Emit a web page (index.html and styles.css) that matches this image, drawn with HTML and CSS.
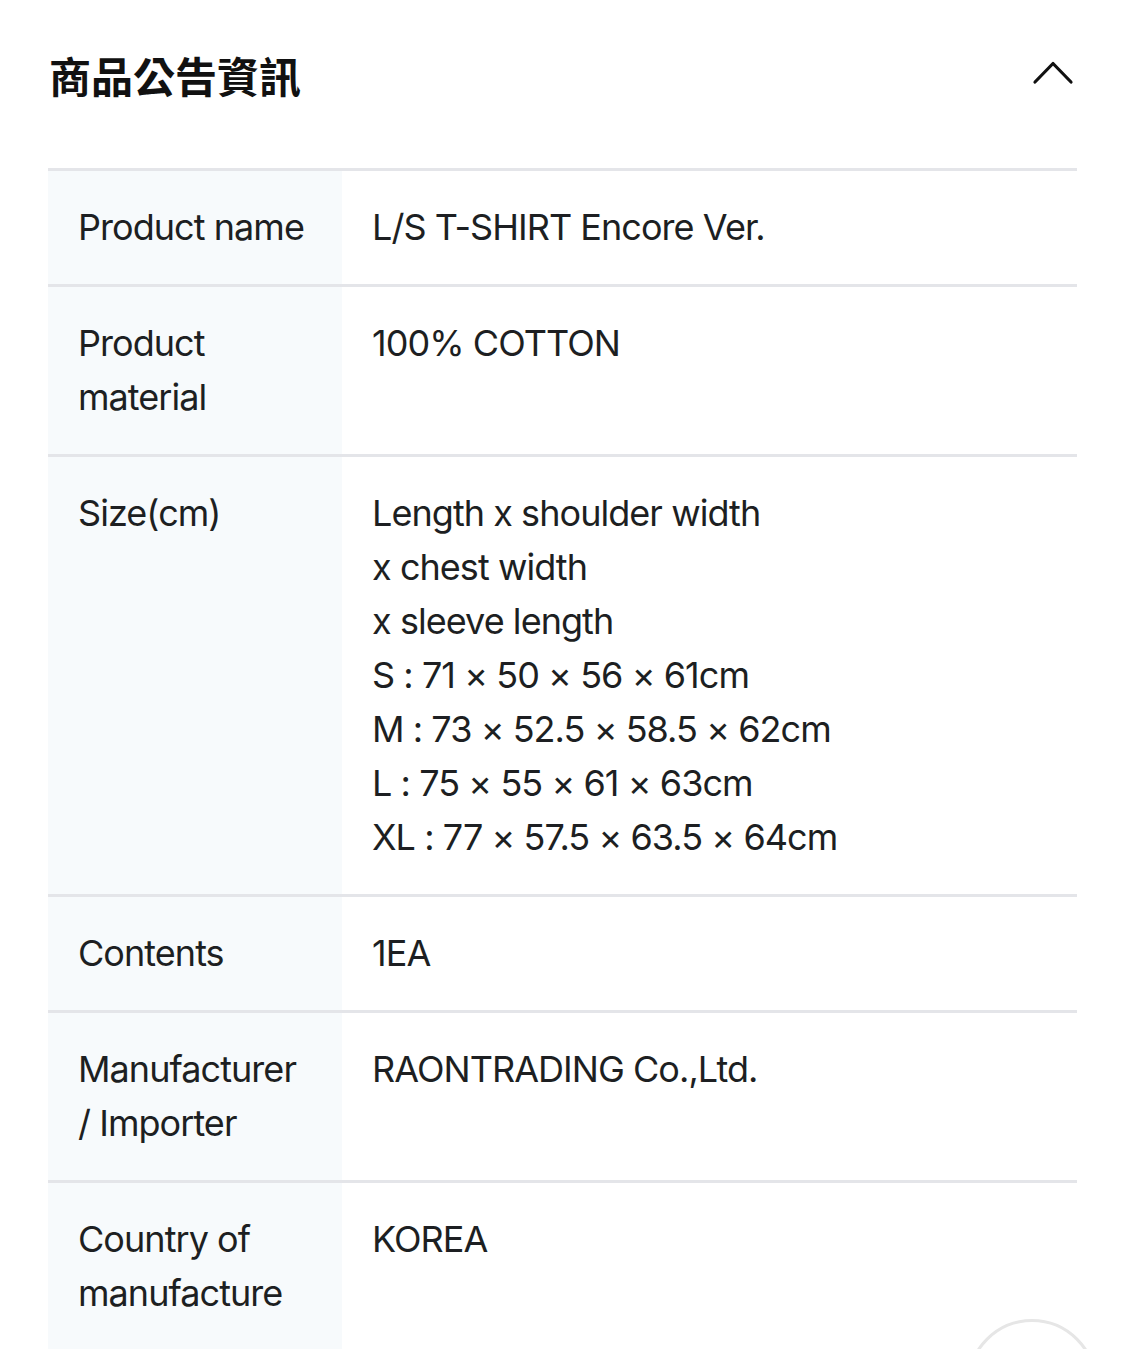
FILE: index.html
```html
<!DOCTYPE html>
<html lang="zh-Hant">
<head>
<meta charset="utf-8">
<title>商品公告資訊</title>
<link rel="stylesheet" href="styles.css">
</head>
<body>
<main class="page">
  <header class="head">
    <h1 class="title">商品公告資訊</h1>
    <svg class="chev" width="48" height="48" viewBox="0 0 48 48" aria-hidden="true">
      <path d="M6 34 L24 15.5 L42 34" fill="none" stroke="#111" stroke-width="3.2" stroke-linecap="round" stroke-linejoin="round"/>
    </svg>
  </header>
  <section class="info">
    <div class="row">
      <div class="label">Product name</div>
      <div class="value">L/S T-SHIRT Encore Ver.</div>
    </div>
    <div class="row">
      <div class="label">Product<br>material</div>
      <div class="value">100% COTTON</div>
    </div>
    <div class="row">
      <div class="label">Size(cm)</div>
      <div class="value">Length x shoulder width<br>x chest width<br>x sleeve length<br>S : 71 × 50 × 56 × 61cm<br>M : 73 × 52.5 × 58.5 × 62cm<br>L : 75 × 55 × 61 × 63cm<br>XL : 77 × 57.5 × 63.5 × 64cm</div>
    </div>
    <div class="row">
      <div class="label">Contents</div>
      <div class="value">1EA</div>
    </div>
    <div class="row">
      <div class="label">Manufacturer<br>/ Importer</div>
      <div class="value">RAONTRADING Co.,Ltd.</div>
    </div>
    <div class="row">
      <div class="label">Country of<br>manufacture</div>
      <div class="value">KOREA</div>
    </div>
  </section>
</main>
<div class="fab" aria-hidden="true"></div>
</body>
</html>
```

FILE: styles.css
```css
html, body {
  margin: 0;
  padding: 0;
  background: #ffffff;
}
body {
  font-family: Inter, "Noto Sans", "Noto Sans CJK TC", sans-serif;
  color: #1d1f22;
  overflow: hidden;
  height: 1349px;
}
.page {
  padding: 0 48px;
}
.head {
  height: 154px;
  display: flex;
  align-items: center;
  justify-content: space-between;
}
.title {
  margin: -5px 0 0 1px;
  font-family: "Noto Sans CJK TC", "Noto Sans CJK SC", sans-serif;
  font-size: 42px;
  font-weight: 700;
  line-height: 1;
  color: #111111;
}
.chev {
  display: block;
  margin-top: -10px;
}
.info {
  margin-top: 14px;
}
.row {
  display: grid;
  grid-template-columns: 294px 1fr;
  border-top: 3px solid #e4e5e9;
}
.label,
.value {
  padding: 29px 20px 30px 30px;
  font-size: 36px;
  line-height: 54px;
  letter-spacing: -0.95px;
}
.label {
  background: #f7fafc;
  padding-left: 30px;
  padding-right: 10px;
}
.fab {
  position: fixed;
  left: 967px;
  top: 1319px;
  width: 124px;
  height: 124px;
  border-radius: 50%;
  border: 3px solid #e6e6e6;
  background: #ffffff;
}
```
